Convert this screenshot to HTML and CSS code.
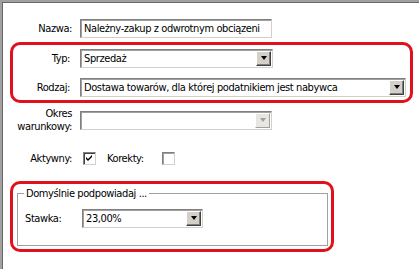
FILE: index.html
```html
<html>
<head>
  <title>Stawka VAT</title>
  <link rel="stylesheet" href="styles.css">
</head>
<body>
  <div class="window">
    <div class="row row-name">
      <label class="lbl">Nazwa:</label>
      <div class="field field-name">Należny-zakup z odwrotnym obciązeni</div>
    </div>

    <div class="mark mark-main">
      <div class="row row-typ">
        <label class="lbl">Typ:</label>
        <div class="combo combo-typ">
          <span class="combo-text">Sprzedaż</span>
          <span class="drop"><span class="arrow"></span></span>
        </div>
      </div>
      <div class="row row-rodzaj">
        <label class="lbl">Rodzaj:</label>
        <div class="combo combo-rodzaj">
          <span class="combo-text">Dostawa towarów, dla której podatnikiem jest nabywca</span>
          <span class="drop"><span class="arrow"></span></span>
        </div>
      </div>
    </div>

    <div class="row row-okres">
      <label class="lbl lbl-wrap">Okres<br>warunkowy:</label>
      <div class="combo combo-okres disabled">
        <span class="combo-text"></span>
        <span class="drop"><span class="arrow"></span></span>
      </div>
    </div>

    <div class="row row-flags">
      <label class="lbl">Aktywny:</label>
      <span class="check checked">
        <svg width="7" height="7" viewBox="0 0 7 7"><path d="M0 2 L2 4 L6 0 L6 2 L2 6 L0 4 Z" fill="#000"/></svg>
      </span>
      <label class="lbl-inline">Korekty:</label>
      <span class="check disabled"></span>
    </div>

    <div class="mark mark-rate">
      <fieldset class="group">
        <legend>Domyślnie podpowiadaj ...</legend>
        <div class="row row-stawka">
          <label class="lbl-left">Stawka:</label>
          <div class="combo combo-stawka">
            <span class="combo-text">23,00%</span>
            <span class="drop"><span class="arrow"></span></span>
          </div>
        </div>
      </fieldset>
    </div>
  </div>
</body>
</html>
```

FILE: styles.css
```css
body {
  margin: 0;
  font-family: "DejaVu Sans Condensed", "Liberation Sans", sans-serif;
  font-size: 11px;
  letter-spacing: -0.4px;
  color: #000;
  background: #fff;
}

.window {
  height: 267px;
  border-top: 2px solid #a0a0a0;
  border-left: 2px solid #a0a0a0;
  box-shadow: inset 1px 1px 0 #696969;
  background: #fff;
}

.row {
  display: flex;
  align-items: center;
}

.lbl {
  width: 78px;
  padding-right: 8px;
  box-sizing: border-box;
  text-align: right;
}

.lbl-wrap {
  line-height: 13px;
}

.row-name {
  padding-top: 17px;
}

.field,
.combo {
  height: 19px;
  box-sizing: border-box;
  border: 1px solid;
  border-color: #808080 #d4d0c8 #d4d0c8 #808080;
  box-shadow: inset 1px 1px 0 #a0a0a0;
  background: #fff;
  white-space: nowrap;
  overflow: hidden;
}

.field {
  padding: 2px 0 0 3px;
  width: 192px;
}

.combo {
  display: flex;
  align-items: center;
}

.combo-text {
  flex: 1;
  padding-left: 3px;
  overflow: hidden;
}

.drop {
  width: 15px;
  height: 15px;
  margin-right: 1px;
  box-sizing: border-box;
  background: #d4d0c8;
  border: 1px solid;
  border-color: #fff #404040 #404040 #fff;
  box-shadow: inset -1px -1px 0 #808080;
  display: flex;
  align-items: center;
  justify-content: center;
}

.arrow {
  width: 0;
  height: 0;
  border-left: 3.5px solid transparent;
  border-right: 3.5px solid transparent;
  border-top: 4px solid #000;
  margin-bottom: 1px;
}

.disabled .drop {
  border-color: #fff #a0a0a0 #a0a0a0 #fff;
  box-shadow: none;
  background: #e8e6e0;
}

.disabled .arrow {
  border-top-color: #a0a0a0;
}

/* red highlight frames */
.mark {
  border: 3px solid #e0111b;
  border-radius: 10px;
  margin-left: 8px;
}

.mark-main {
  width: 403px;
  height: 61px;
  box-sizing: border-box;
  margin-top: 4px;
  padding-top: 4px;
}

.mark-main .lbl {
  width: 67px;
  padding-right: 10px;
}

.combo-typ {
  width: 193px;
}

.row-rodzaj {
  margin-top: 10px;
}

.combo-rodzaj {
  width: 326px;
}

.row-okres {
  margin-top: 4px;
}

.combo-okres {
  width: 192px;
}

.row-flags {
  margin-top: 18px;
  height: 14px;
}

.check {
  width: 13px;
  height: 13px;
  box-sizing: border-box;
  border: 1px solid;
  border-color: #808080 #d4d0c8 #d4d0c8 #808080;
  box-shadow: inset 1px 1px 0 #404040;
  background: #fff;
  display: flex;
  align-items: center;
  justify-content: center;
  margin-left: 3px;
}

.check.disabled {
  box-shadow: inset 1px 1px 0 #a0a0a0;
  margin-left: 18px;
}

.lbl-inline {
  margin-left: 11px;
}

.mark-rate {
  width: 324px;
  height: 71px;
  box-sizing: border-box;
  margin-top: 16px;
}

.group {
  margin: 3px 3px 0 4px;
  padding: 0;
  height: 59px;
  box-sizing: border-box;
  border: 1px solid #a0a0a0;
  box-shadow: 1px 1px 0 #fff, inset 1px 1px 0 #fff;
}

.group legend {
  margin-left: 6px;
  padding: 0 2px;
  line-height: 13px;
}

.row-stawka {
  margin-top: 9px;
}

.lbl-left {
  width: 64px;
  padding-left: 7px;
  box-sizing: border-box;
}

.combo-stawka {
  width: 121px;
}
```
